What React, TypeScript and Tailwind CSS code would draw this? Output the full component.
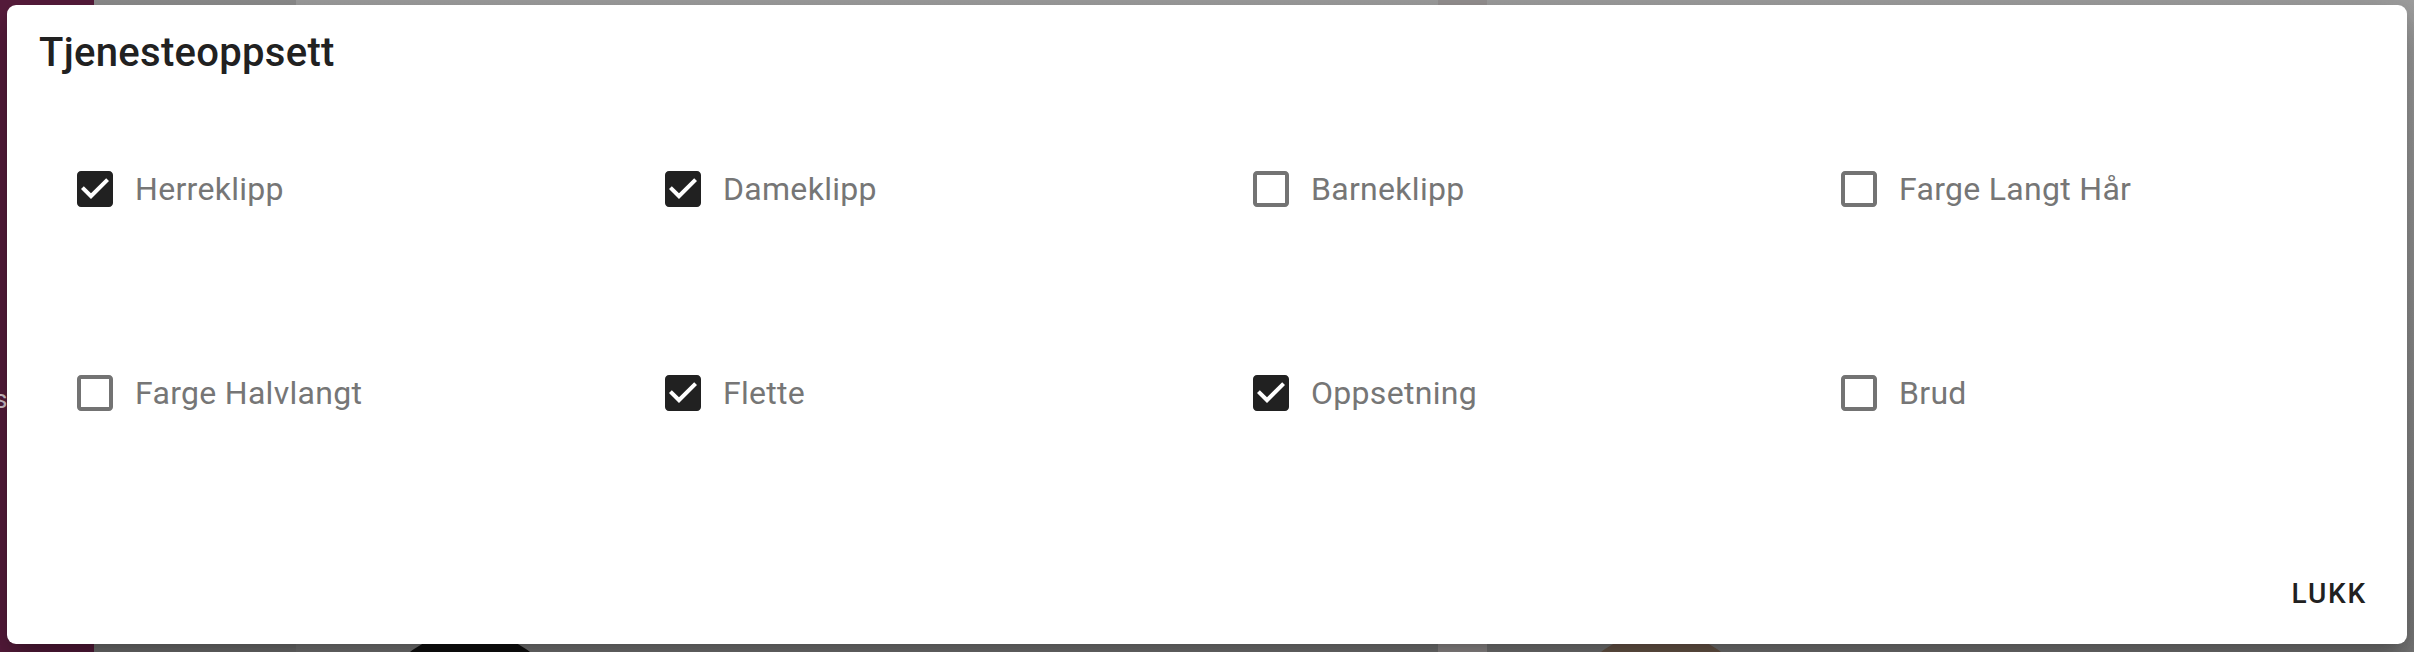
import { useState } from 'react';

const services = [
  { id: 'herreklipp', label: 'Herreklipp', checked: true },
  { id: 'dameklipp', label: 'Dameklipp', checked: true },
  { id: 'barneklipp', label: 'Barneklipp', checked: false },
  { id: 'farge-langt', label: 'Farge Langt Hår', checked: false },
  { id: 'farge-halvlangt', label: 'Farge Halvlangt', checked: false },
  { id: 'flette', label: 'Flette', checked: true },
  { id: 'oppsetning', label: 'Oppsetning', checked: true },
  { id: 'brud', label: 'Brud', checked: false },
];

function CheckIcon({ checked }: { checked: boolean }) {
  if (checked) {
    return (
      <svg viewBox="0 0 24 24" className="w-[48px] h-[48px] shrink-0 fill-[#212121]">
        <path d="M19 3H5c-1.11 0-2 .9-2 2v14c0 1.1.89 2 2 2h14c1.11 0 2-.9 2-2V5c0-1.1-.89-2-2-2zm-9 14l-5-5 1.41-1.41L10 14.17l7.59-7.59L19 8l-9 9z" />
      </svg>
    );
  }
  return (
    <svg viewBox="0 0 24 24" className="w-[48px] h-[48px] shrink-0 fill-[#737373]">
      <path d="M19 5v14H5V5h14m0-2H5c-1.1 0-2 .9-2 2v14c0 1.1.9 2 2 2h14c1.1 0 2-.9 2-2V5c0-1.1-.9-2-2-2z" />
    </svg>
  );
}

export default function App() {
  const [state, setState] = useState<Record<string, boolean>>(
    Object.fromEntries(services.map((s) => [s.id, s.checked]))
  );

  const toggle = (id: string) => setState((prev) => ({ ...prev, [id]: !prev[id] }));

  return (
    <div className="relative h-[652px] w-full overflow-hidden font-['Roboto',sans-serif]">
      {/* page behind the backdrop */}
      <div className="flex h-full">
        <div className="relative w-[94px] bg-[#571c3c]">
          <span className="absolute left-[-6px] top-[380px] text-[26px] text-[#d8c8d0]">s</span>
        </div>
        <div className="w-[202px] bg-gradient-to-b from-[#8f8f8f] to-[#737373]" />
        <div className="relative flex-1 bg-gradient-to-b from-[#a0a0a0] to-[#7a7a7a]">
          <div className="absolute left-[1142px] top-0 h-full w-[49px] bg-[#979393]" />
          <div className="absolute left-[74px] top-[632px] h-[200px] w-[200px] rounded-full bg-[#111]" />
          <div className="absolute left-[1265px] top-[632px] h-[200px] w-[200px] rounded-full bg-[#6e5a4c]" />
        </div>
      </div>

      {/* dialog */}
      <div className="absolute left-[7px] top-[5px] flex h-[639px] w-[2400px] flex-col rounded-[9px] bg-white shadow-[0_11px_15px_-7px_rgba(0,0,0,0.2),0_24px_38px_3px_rgba(0,0,0,0.14),0_9px_46px_8px_rgba(0,0,0,0.12)]">
        <h2 className="pl-[32px] pt-[16px] text-[40px] font-medium leading-[64px] tracking-[0.3px] text-[#212121]">
          Tjenesteoppsett
        </h2>

        <div className="mt-[80px] grid grid-cols-[repeat(4,588px)] gap-y-[156px] pl-[64px]">
          {services.map((s) => (
            <label
              key={s.id}
              className="flex h-[48px] cursor-pointer items-center gap-[16px]"
              onClick={() => toggle(s.id)}
            >
              <CheckIcon checked={state[s.id]} />
              <span className="text-[32px] leading-[48px] tracking-[0.3px] text-[#767676]">
                {s.label}
              </span>
            </label>
          ))}
        </div>

        <div className="flex-1" />

        <div className="flex justify-end pb-[26px] pr-[40px]">
          <button className="text-[28px] font-medium leading-[49px] tracking-[1.8px] text-[#212121]">
            LUKK
          </button>
        </div>
      </div>
    </div>
  );
}
